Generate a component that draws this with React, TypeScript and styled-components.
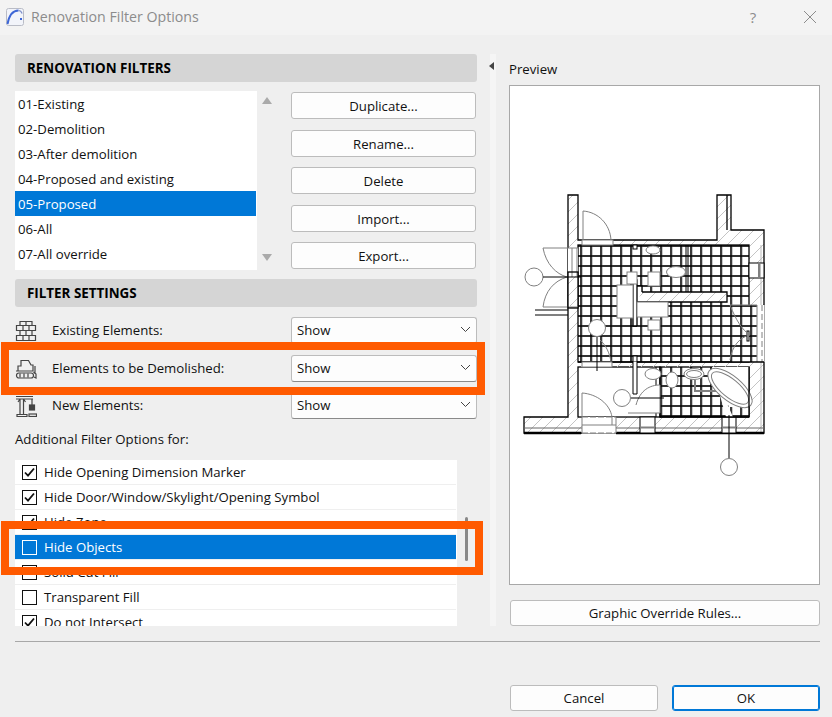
import React from "react";
import styled, { createGlobalStyle } from "styled-components";

const Global = createGlobalStyle`
  html, body { margin: 0; padding: 0; background: #efefef; }
  * { box-sizing: border-box; }
`;

const Window = styled.div`
  position: relative;
  width: 832px;
  height: 717px;
  overflow: hidden;
  background: #efefef;
  font-family: "Open Sans", "Noto Sans", sans-serif;
  font-size: 13.2px;
  color: #111;
`;

const TitleBar = styled.div`
  height: 35px;
  background: #f3f3f3;
  display: flex;
  align-items: center;
  padding: 0 15px 2px 6px;
`;
const TitleText = styled.div`
  flex: 1;
  margin-left: 7px;
  font-size: 14.2px;
  color: #8c8c8c;
`;
const Help = styled.div`
  width: 20px;
  text-align: center;
  font-size: 15px;
  color: #8c8c8c;
  margin-right: 40px;
`;

const Main = styled.div`
  height: 606px;
  display: flex;
  padding-left: 15px;
`;
const LeftCol = styled.div`
  width: 462px;
  padding-top: 19px;
  display: flex;
  flex-direction: column;
`;
const Splitter = styled.div`
  position: relative;
  width: 6px;
  height: 572px;
  margin: 19px 13px 0 13px;
  background: #f5f5f5;
`;
const SplitArrow = styled.div`
  position: absolute;
  left: -1px;
  top: 8px;
  width: 0;
  height: 0;
  border-top: 4px solid transparent;
  border-bottom: 4px solid transparent;
  border-right: 5px solid #444;
`;
const RightCol = styled.div`
  width: 311px;
  padding-top: 24px;
  display: flex;
  flex-direction: column;
`;

const SectionHead = styled.div`
  height: 28px;
  background: #d5d5d5;
  border-radius: 3px;
  display: flex;
  align-items: center;
  padding-left: 12px;
  font-weight: 700;
  font-size: 13.4px;
  color: #000;
`;

const FilterBlock = styled.div`
  margin-top: 9px;
  height: 179px;
  display: grid;
  grid-template-columns: 242px 34px 185px;
`;
const FilterList = styled.div`
  background: #fff;
`;
const FilterRow = styled.div<{ $selected?: boolean }>`
  height: 25px;
  line-height: 27px;
  padding-left: 3px;
  margin-right: 1px;
  background: ${(p) => (p.$selected ? "#0078d7" : "transparent")};
  color: ${(p) => (p.$selected ? "#fff" : "#111")};
`;
const ScrollArrows = styled.div`
  display: flex;
  flex-direction: column;
  justify-content: space-between;
  align-items: center;
  padding: 6px 14px 9px 0;
`;
const ArrowUp = styled.div`
  width: 0;
  height: 0;
  border-left: 5.5px solid transparent;
  border-right: 5.5px solid transparent;
  border-bottom: 7px solid #aaa;
`;
const ArrowDown = styled(ArrowUp)`
  border-bottom: 0;
  border-top: 7px solid #aaa;
`;
const ButtonCol = styled.div`
  margin-top: 1px;
  display: flex;
  flex-direction: column;
  & > * + * {
    margin-top: 10px;
  }
  & > :nth-child(even) {
    margin-top: 11px;
  }
`;
const Button = styled.div<{ $h?: number; $primary?: boolean }>`
  height: ${(p) => p.$h ?? 27}px;
  flex: none;
  background: #fdfdfd;
  border: 1px solid ${(p) => (p.$primary ? "#0078d7" : "#bcbcbc")};
  box-shadow: ${(p) => (p.$primary ? "inset 0 0 0 1px #0078d7" : "none")};
  border-radius: 3px;
  display: flex;
  align-items: center;
  justify-content: center;
  color: #111;
`;

const SettingsHead = styled(SectionHead)`
  margin-top: 9px;
`;
const Settings = styled.div`
  margin-top: 10px;
  display: flex;
  flex-direction: column;
  & > * + * {
    margin-top: 10px;
  }
  & > :nth-child(even) {
    margin-top: 11px;
  }
`;
const SettingRow = styled.div`
  height: 27px;
  display: grid;
  grid-template-columns: 37px 239px 186px;
  align-items: center;
`;
const SettingLabel = styled.span`
  padding-bottom: 2px;
`;
const SelectBox = styled.div`
  height: 27px;
  background: #fdfdfd;
  border: 1px solid #bcbcbc;
  border-bottom-color: #8a8a8a;
  border-radius: 3px;
  display: flex;
  align-items: center;
  justify-content: space-between;
  padding: 0 5px 2px 5px;
`;
const AddLabel = styled.div`
  margin-top: 10px;
  height: 20px;
  line-height: 20px;
`;
const ChecksArea = styled.div`
  margin-top: 11px;
  display: flex;
  align-items: flex-start;
`;
const CheckList = styled.div`
  width: 442px;
  height: 166px;
  overflow: hidden;
  background: #fff;
`;
const CheckRow = styled.div<{ $selected?: boolean }>`
  height: 25px;
  display: flex;
  align-items: center;
  border-bottom: 1px solid #efefef;
  margin-right: 1px;
  padding-left: 7px;
  background: ${(p) => (p.$selected ? "#0078d7" : "#fff")};
  background-clip: padding-box;
  color: ${(p) => (p.$selected ? "#fff" : "#111")};
`;
const Box = styled.span<{ $selected?: boolean }>`
  width: 15px;
  height: 15px;
  flex: none;
  margin-right: 7px;
  border: 1px solid ${(p) => (p.$selected ? "#fff" : "#111")};
  background: ${(p) => (p.$selected ? "transparent" : "#fff")};
  display: flex;
  align-items: center;
  justify-content: center;
`;
const Thumb = styled.div`
  width: 3px;
  height: 44px;
  margin: 57px 0 0 8px;
  border-radius: 2px;
  background: #888;
`;

const PreviewLabel = styled.div`
  height: 20px;
  line-height: 20px;
  margin-bottom: 6px;
`;
const PreviewBox = styled.div`
  height: 500px;
  background: #fff;
  border: 1px solid #a8a8a8;
  overflow: hidden;
`;
const PlanSvg = styled.svg`
  display: block;
  width: 311px;
  height: 500px;
  margin: -1px;
`;
const OverrideButton = styled(Button)`
  margin: 15px 0 0 1px;
`;

const Rule = styled.div`
  height: 1px;
  margin: 0 12px 0 15px;
  background: #a8a8a8;
`;
const Footer = styled.div`
  display: flex;
  justify-content: flex-end;
  gap: 14px;
  padding: 43px 12px 0 0;
`;
const FooterButton = styled(Button)`
  width: 148px;
`;

const Highlight = styled.div<{ $top: number; $width: number; $height: number }>`
  position: absolute;
  left: 1px;
  top: ${(p) => p.$top}px;
  width: ${(p) => p.$width}px;
  height: ${(p) => p.$height}px;
  border: 8px solid #ff5a00;
  pointer-events: none;
`;

const filters = ["01-Existing", "02-Demolition", "03-After demolition", "04-Proposed and existing", "05-Proposed", "06-All", "07-All override"];
const checks: [string, boolean, boolean?][] = [
  ["Hide Opening Dimension Marker", true],
  ["Hide Door/Window/Skylight/Opening Symbol", true],
  ["Hide Zone", true],
  ["Hide Objects", false, true],
  ["Solid Cut Fill", false],
  ["Transparent Fill", false],
  ["Do not Intersect", true],
];

const Chevron = () => (
  <svg width="11" height="7" viewBox="0 0 11 7" fill="none" stroke="#444" strokeWidth="1">
    <path d="M1 1l4.5 4.5L10 1" />
  </svg>
);
const Tick = () => (
  <svg width="13" height="13" viewBox="0 0 13 13" fill="none" stroke="#111" strokeWidth="1.8">
    <path d="M2 6.5l3 3.2L11 2.5" />
  </svg>
);
const Logo = () => (
  <svg width="18" height="18" viewBox="0 0 18 18" fill="none">
    <rect x="0.5" y="0.5" width="17" height="17" rx="2" fill="#f2f4fa" stroke="#b9bcc6" />
    <path d="M1.5 16C3 8 6.5 2.5 12.5 2.5" stroke="#3d66d6" strokeWidth="2" />
    <path d="M12.5 2.5c1.6 0 3 1.2 3.6 3" stroke="#7d8fc8" strokeWidth="1.2" />
    <rect x="14" y="10" width="2" height="2" fill="#3d66d6" />
  </svg>
);
const CloseIcon = () => (
  <svg width="14" height="14" viewBox="0 0 14 14" stroke="#8c8c8c" strokeWidth="1">
    <path d="M1 1l12 12M13 1L1 13" />
  </svg>
);
const Bricks = () => (
  <svg width="22" height="22" viewBox="0 0 22 22" fill="none" stroke="#444" strokeWidth="1.2">
    <path d="M5 1.5h12v4H5zM1.5 5.5h19v5h-19zM5 10.5h12v5H5zM1.5 15.5h19v5h-19zM8 5.5v5M14 5.5v5M8 15.5v5M14 15.5v5M11 1.5v4M11 10.5v5" />
  </svg>
);
const Dozer = () => (
  <svg width="22" height="22" viewBox="0 0 22 22" fill="none" stroke="#444" strokeWidth="1.2">
    <path d="M3 13V8h3V2.5h7.5L16 7h2v6zM1 13h17" />
    <rect x="1.5" y="15" width="17" height="5" rx="2.5" />
    <path d="M5 15.5v4M9 15.5v4M13 15.5v4M18.5 14l2.5 2v4l-2-1M20 8v8" />
  </svg>
);
const Crane = () => (
  <svg width="22" height="22" viewBox="0 0 22 22" fill="none" stroke="#444" strokeWidth="1.2">
    <path d="M1 1.5h17M1 4h17M5 4v15M8.5 4v15M3 7l2-3M10.5 7L8.5 4M2 19.5h10v2H2z" />
    <path d="M17 4v6" />
    <rect x="14.5" y="10" width="5" height="5" fill="#444" />
    <rect x="14" y="19" width="7.5" height="2.5" />
  </svg>
);

const G = "#808080";

const Plan = () => (
  <PlanSvg viewBox="509 85 311 500">
    <defs>
      <pattern id="hatch" patternUnits="userSpaceOnUse" width="12" height="12">
        <path d="M-3 15L15 -3M-3 3L3 -3M9 15L15 9" stroke="#c4c4c4" strokeWidth="1" />
      </pattern>
      <pattern id="tile" patternUnits="userSpaceOnUse" x="580" y="245" width="10" height="10">
        <rect width="10" height="10" fill="#fff" />
        <path d="M1.5 0v10M0 0.5h10" stroke="#c8c8c8" strokeWidth="3" />
        <path d="M1 0v10M0 1h10" stroke="#000" strokeWidth="1.4" />
      </pattern>
    </defs>

    <path d="M568 195V417H524V433H764V230H731V195H717V240H578V195Z" fill="#fff" />
    <path d="M568 195V417H524V433H764V230H731V195H717V240H578V195Z" fill="url(#hatch)" stroke="#000" strokeWidth="1.3" />
    <path d="M727 195V230" stroke="#000" strokeWidth="1.3" />
    <path d="M761 245V433" stroke="#bbb" strokeWidth="1" />

    <rect x="578" y="245" width="171" height="117" fill="url(#tile)" stroke="#000" strokeWidth="1.3" />
    <rect x="749" y="305" width="15.5" height="57" fill="#fff" />
    <rect x="730" y="305" width="27" height="57" fill="url(#tile)" />
    <path d="M730 305H757V362" stroke={G} fill="none" />
    <path d="M762 305V362" stroke={G} strokeDasharray="6 3" />
    <path d="M578 362H764" stroke="#000" strokeWidth="1.3" />
    <rect x="578" y="367" width="82" height="50" fill="#fff" stroke="#000" strokeWidth="1.3" />
    <rect x="660" y="367" width="89" height="50" fill="url(#tile)" stroke="#000" strokeWidth="1.3" />
    <path d="M578 363h171v4h-171z" fill="url(#hatch)" />
    <path d="M524 428H764" stroke="#666" strokeWidth="1" />
    <path d="M524 433H581M616 433H764" stroke="#000" strokeWidth="2.5" />

    <path d="M633 280h4v46h-4zM637 286h5v6h85v10H637z" fill="#fff" />
    <path d="M642 292h85v10H637" fill="url(#hatch)" stroke="#000" strokeWidth="1.3" />
    <path d="M637 326V280h-4v46h4M637 286h5v6" fill="none" stroke="#000" strokeWidth="1.3" />
    <rect x="617" y="285" width="16" height="33" fill="#fff" stroke={G} />
    <rect x="637" y="302" width="31" height="15" fill="#fff" stroke={G} />
    <path d="M686 245v47M688 245v47" stroke="#000" strokeWidth="1" />
    <rect x="633" y="245" width="4" height="4" fill="#fff" stroke="#000" />
    <rect x="633" y="356" width="4" height="6" fill="#fff" stroke="#000" />
    <path d="M633 362V394h4V362" fill="#fff" stroke="#000" />
    <path d="M656 367V417" stroke="#000" />

    <rect x="582" y="240" width="31" height="5" fill="#fff" stroke={G} />
    <path d="M583 240V211C598 212 610 224 611 240" fill="none" stroke={G} />

    <rect x="568" y="248" width="10" height="60" fill="#fff" />
    <path d="M543 248H578M572 248V277M577 248V277" stroke={G} fill="none" />
    <path d="M543 248C546 264 556 274 567 277" fill="none" stroke={G} />
    <path d="M543 307H577M543 307C545 291 554 281 567 277" fill="none" stroke={G} />
    <rect x="568" y="272" width="10" height="36" fill="url(#hatch)" stroke="#000" strokeWidth="1.3" />
    <path d="M535 310H568M535 315H568" stroke="#000" strokeWidth="1" />
    <circle cx="534" cy="277" r="9" fill="#fff" stroke={G} />
    <path d="M543 277H581" stroke="#000" strokeWidth="1" />

    <rect x="582" y="362" width="30" height="5" fill="#fff" stroke={G} />
    <path d="M600 340C606 345 610 354 611 362" fill="none" stroke={G} />
    <circle cx="597" cy="328" r="8.5" fill="#fff" stroke={G} />
    <path d="M597 337V371" stroke="#000" />

    <rect x="582" y="417" width="34" height="16.5" fill="#fff" />
    <path d="M582 417V393C597 394 610 404 612 417" fill="none" stroke={G} />
    <path d="M582 417H616M582 433H616" stroke={G} strokeDasharray="6 2" />
    <path d="M582 425H616M582 417V433M616 417V433M612 417V425" stroke={G} fill="none" />
    <circle cx="622" cy="398" r="8.5" fill="#fff" stroke={G} />

    <rect x="640" y="417" width="15" height="16" fill="#fff" stroke="#000" />
    <path d="M640 427.5H655" stroke={G} strokeWidth="2" />
    <rect x="722" y="417" width="14" height="16" fill="#fff" stroke="#000" />
    <path d="M722 427.5H736" stroke={G} strokeWidth="2" />

    <rect x="749" y="263" width="15" height="15" fill="#fff" stroke="#000" />
    <rect x="758" y="263" width="2.5" height="15" fill={G} />
    <rect x="747" y="331" width="2" height="10" fill="#fff" stroke="#000" />

    <ellipse cx="653" cy="250" rx="7" ry="4" fill="#fff" stroke={G} />
    <ellipse cx="676" cy="272" rx="9.5" ry="5.5" fill="#fff" stroke={G} />
    <rect x="648" y="272" width="12" height="14" fill="#fff" stroke={G} />
    <rect x="627" y="272" width="10" height="12" fill="#fff" stroke={G} />
    <rect x="648" y="320" width="12" height="10" fill="#fff" stroke={G} />
    <path d="M730 305C736 320 742 330 750 335M730 360C732 346 740 337 750 335" fill="none" stroke={G} />
    <ellipse cx="653" cy="374" rx="8" ry="5.5" fill="#fff" stroke={G} />
    <ellipse cx="672" cy="380" rx="6" ry="8" fill="#fff" stroke={G} />
    <ellipse cx="694" cy="374" rx="10" ry="5.5" fill="#fff" stroke={G} />
    <ellipse cx="694" cy="374" rx="7.5" ry="3.5" fill="none" stroke={G} />
    <path d="M695 380v11h22" fill="none" stroke={G} strokeWidth="2" />
    <path d="M712 367h37v50h-23z" fill="#fff" stroke="none" />
    <path d="M711 367L729 407L749 407V417H733" fill="url(#tile)" stroke="none" />
    <ellipse cx="730" cy="388" rx="27" ry="12" transform="rotate(40 730 388)" fill="#fff" stroke={G} />
    <ellipse cx="730" cy="388" rx="23" ry="9" transform="rotate(40 730 388)" fill="none" stroke={G} />
    <path d="M636 405C640 390 650 385 660 385V413H628" fill="#fff" stroke={G} />
    <path d="M631 398H664" stroke="#000" />
    <path d="M749 367V417M660 417H749" stroke="#000" strokeWidth="1.3" fill="none" />

    <path d="M729 415V458" stroke="#000" />
    <circle cx="729" cy="467" r="8.5" fill="#fff" stroke={G} />
  </PlanSvg>
);

export default function App() {
  return (
    <Window>
      <Global />
      <TitleBar>
        <Logo />
        <TitleText>Renovation Filter Options</TitleText>
        <Help>?</Help>
        <CloseIcon />
      </TitleBar>
      <Main>
        <LeftCol>
          <SectionHead>RENOVATION FILTERS</SectionHead>
          <FilterBlock>
            <FilterList>
              {filters.map((f, i) => (
                <FilterRow key={f} $selected={i === 4}>{f}</FilterRow>
              ))}
            </FilterList>
            <ScrollArrows>
              <ArrowUp />
              <ArrowDown />
            </ScrollArrows>
            <ButtonCol>
              {["Duplicate...", "Rename...", "Delete", "Import...", "Export..."].map((b) => (
                <Button key={b}>{b}</Button>
              ))}
            </ButtonCol>
          </FilterBlock>
          <SettingsHead>FILTER SETTINGS</SettingsHead>
          <Settings>
            <SettingRow>
              <Bricks />
              <SettingLabel>Existing Elements:</SettingLabel>
              <SelectBox>Show<Chevron /></SelectBox>
            </SettingRow>
            <SettingRow>
              <Dozer />
              <SettingLabel>Elements to be Demolished:</SettingLabel>
              <SelectBox>Show<Chevron /></SelectBox>
            </SettingRow>
            <SettingRow>
              <Crane />
              <SettingLabel>New Elements:</SettingLabel>
              <SelectBox>Show<Chevron /></SelectBox>
            </SettingRow>
          </Settings>
          <AddLabel>Additional Filter Options for:</AddLabel>
          <ChecksArea>
            <CheckList>
              {checks.map(([label, on, sel]) => (
                <CheckRow key={label} $selected={sel}>
                  <Box $selected={sel}>{on && <Tick />}</Box>
                  {label}
                </CheckRow>
              ))}
            </CheckList>
            <Thumb />
          </ChecksArea>
        </LeftCol>
        <Splitter>
          <SplitArrow />
        </Splitter>
        <RightCol>
          <PreviewLabel>Preview</PreviewLabel>
          <PreviewBox>
            <Plan />
          </PreviewBox>
          <OverrideButton $h={26}>Graphic Override Rules...</OverrideButton>
        </RightCol>
      </Main>
      <Rule />
      <Footer>
        <FooterButton $h={26}>Cancel</FooterButton>
        <FooterButton $h={26} $primary>OK</FooterButton>
      </Footer>
      <Highlight $top={342} $width={484} $height={53} />
      <Highlight $top={521} $width={482} $height={54} />
    </Window>
  );
}
